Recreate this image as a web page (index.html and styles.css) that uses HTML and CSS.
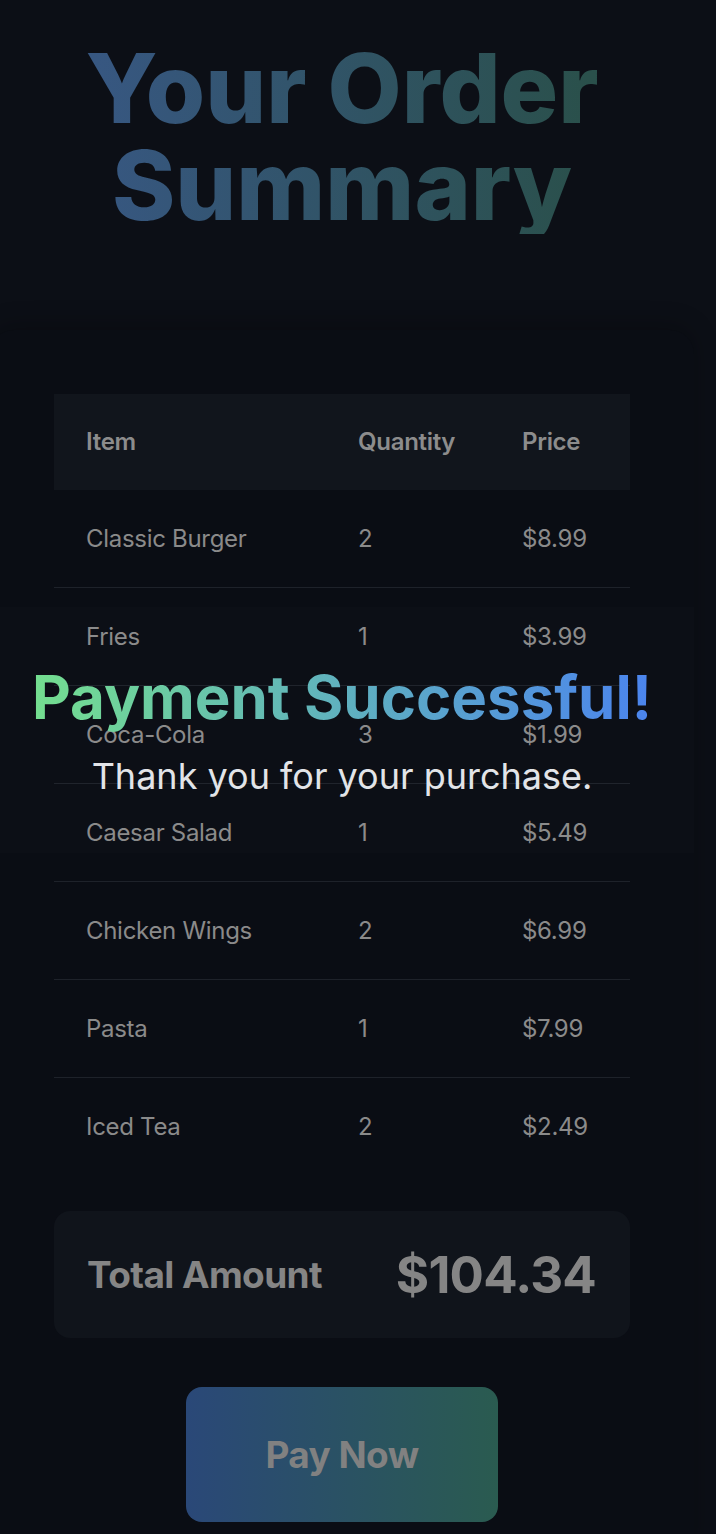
FILE: index.html
```html
<!DOCTYPE html>
<html lang="en">
<head>
<meta charset="utf-8">
<title>Your Order Summary</title>
<link rel="stylesheet" href="styles.css">
</head>
<body>
<main class="page">
  <h1 class="title">Your Order Summary</h1>
  <section class="card">
    <table class="order">
      <thead>
        <tr><th class="c-item">Item</th><th class="c-qty">Quantity</th><th class="c-price">Price</th></tr>
      </thead>
      <tbody>
        <tr><td>Classic Burger</td><td>2</td><td>$8.99</td></tr>
        <tr><td>Fries</td><td>1</td><td>$3.99</td></tr>
        <tr><td>Coca-Cola</td><td>3</td><td>$1.99</td></tr>
        <tr><td>Caesar Salad</td><td>1</td><td>$5.49</td></tr>
        <tr><td>Chicken Wings</td><td>2</td><td>$6.99</td></tr>
        <tr><td>Pasta</td><td>1</td><td>$7.99</td></tr>
        <tr><td>Iced Tea</td><td>2</td><td>$2.49</td></tr>
      </tbody>
    </table>
    <div class="total">
      <span class="total-label">Total Amount</span>
      <span class="total-value">$104.34</span>
    </div>
    <div class="actions">
      <button class="pay" type="button">Pay Now</button>
    </div>
  </section>
</main>
<div class="success">
  <h2 class="success-title">Payment Successful!</h2>
  <p class="success-text">Thank you for your purchase.</p>
</div>
</body>
</html>
```
FILE: styles.css
```css
* { box-sizing: border-box; }
html, body {
  margin: 0;
  padding: 0;
  background: #0c0f16;
  font-family: Inter, "Noto Sans", "DejaVu Sans", sans-serif;
  overflow: hidden;
}
body { position: relative; min-height: 1534px; }
.page {
  width: 704px;
  margin-left: -10px;
  padding-top: 40px;
}
.title {
  margin: 0;
  text-align: center;
  font-size: 96px;
  line-height: 97px;
  font-weight: 800;
  letter-spacing: 0;
  background: linear-gradient(90deg, #375781 15%, #2a504b 85%);
  -webkit-background-clip: text;
  background-clip: text;
  color: transparent;
  padding: 0 90px;
}
.card {
  margin-top: 96px;
  background: #0a0d14;
  border-radius: 24px;
  padding: 64px 64px 40px 64px;
  box-shadow: 0 -4px 24px rgba(0,0,0,0.25);
}
.order {
  width: 576px;
  border-collapse: collapse;
  table-layout: fixed;
  font-size: 24px;
  letter-spacing: -0.3px;
  color: #8a8a8a;
}
.c-item { width: 272px; }
.c-qty { width: 164px; }
.c-price { width: 140px; }
.order th, .order td {
  text-align: left;
  padding: 32px;
  line-height: 33px;
}
.order thead tr { background: #11151c; }
.order th {
  font-weight: 600;
  line-height: 32px;
  color: #8c8c8c;
}
.order tbody tr:not(:last-child) { border-bottom: 1px solid #1e222a; }
.total {
  margin-top: 36px;
  background: #10141b;
  border-radius: 16px;
  height: 127px;
  padding: 0 34px 0 33px;
  display: flex;
  align-items: center;
  justify-content: space-between;
  color: #858585;
  font-weight: 700;
}
.total-label { font-size: 37px; letter-spacing: -0.6px; }
.total-value { font-size: 51px; letter-spacing: -0.8px; }
.actions {
  display: flex;
  justify-content: center;
  margin-top: 49px;
}
.pay {
  width: 312px;
  height: 135px;
  border: none;
  border-radius: 16px;
  background: linear-gradient(90deg, #2a4878, #2a5b50);
  color: #818181;
  font-family: inherit;
  font-size: 37px;
  font-weight: 700;
  letter-spacing: -0.6px;
}
.success {
  position: absolute;
  left: -10px;
  width: 704px;
  top: 607px;
  height: 246px;
  background: rgba(255,255,255,0.012);
  display: flex;
  flex-direction: column;
  align-items: center;
  justify-content: center;
  text-align: center;
}
.success-title {
  margin: 0;
  font-size: 60px;
  line-height: 70px;
  font-weight: 700;
  background: linear-gradient(90deg, #74de8f, #4b84ee);
  -webkit-background-clip: text;
  background-clip: text;
  color: transparent;
}
.success-text {
  margin: 22px 0 0;
  font-size: 36px;
  line-height: 44px;
  color: #e2e4e8;
}
```
